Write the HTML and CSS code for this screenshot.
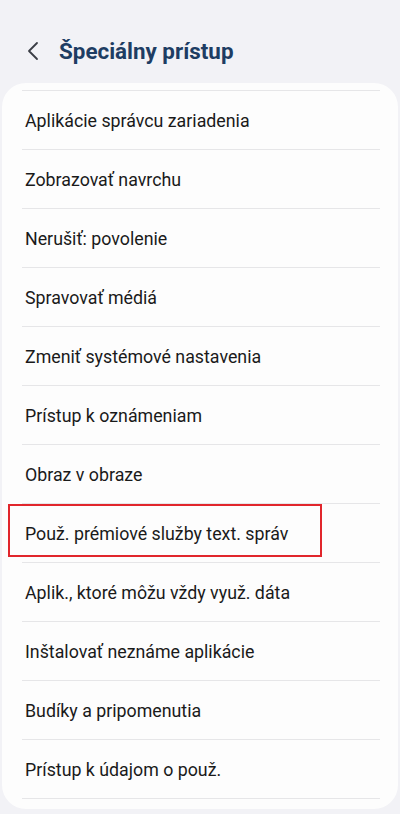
FILE: index.html
```html
<!DOCTYPE html>
<html lang="sk">

<head>
    <meta charset="UTF-8">
    <meta name="viewport" content="width=device-width, initial-scale=1.0">
    <title>Špeciálny prístup</title>
    <link rel="stylesheet" href="styles.css">
</head>

<body>
    <!-- Header -->
    <div class="header">
        <button class="back" aria-label="Späť">
            <svg width="14" height="20" viewBox="0 0 14 20">
                <polyline points="11,2 3,10 11,18" fill="none" stroke="#3a3d44" stroke-width="1.8" stroke-linecap="round" stroke-linejoin="round" />
            </svg>
        </button>
        <h1 class="title">Špeciálny prístup</h1>
    </div>

    <!-- Settings list -->
    <div class="card">
        <ul class="list">
            <li class="item">Aplikácie správcu zariadenia</li>
            <li class="item">Zobrazovať navrchu</li>
            <li class="item">Nerušiť: povolenie</li>
            <li class="item">Spravovať médiá</li>
            <li class="item">Zmeniť systémové nastavenia</li>
            <li class="item">Prístup k oznámeniam</li>
            <li class="item">Obraz v obraze</li>
            <li class="item marked">Použ. prémiové služby text. správ</li>
            <li class="item">Aplik., ktoré môžu vždy využ. dáta</li>
            <li class="item">Inštalovať neznáme aplikácie</li>
            <li class="item">Budíky a pripomenutia</li>
            <li class="item">Prístup k údajom o použ.</li>
        </ul>
    </div>
</body>

</html>
```

FILE: styles.css
```css
body {
    font-family: Roboto, "Noto Sans", Arial, sans-serif;
    background-color: #f2f2f6;
    color: #1a1a1a;
    margin: 0;
    width: 400px;
    height: 814px;
    overflow: hidden;
}

.header {
    display: flex;
    align-items: center;
    height: 83px;
    padding: 18px 0 0 23px;
    box-sizing: border-box;
}

.back {
    background: none;
    border: none;
    padding: 0;
    width: 20px;
    height: 24px;
    display: flex;
    align-items: center;
    justify-content: center;
    cursor: pointer;
}

.title {
    margin: 0 0 0 16px;
    font-size: 22.4px;
    font-weight: 700;
    color: #1e3d63;
    letter-spacing: 0;
}

.card {
    background-color: #fdfdfd;
    margin: 0 2px;
    border-radius: 24px;
    padding: 7px 18px 10px 20px;
}

.list {
    list-style: none;
    margin: 0;
    padding: 0;
    border-bottom: 1px solid #e6e6e8;
}

.item {
    position: relative;
    height: 58px;
    display: flex;
    align-items: center;
    padding-left: 3px;
    border-top: 1px solid #e6e6e8;
    font-size: 17.8px;
}

.item.marked::after {
    content: "";
    position: absolute;
    left: -14px;
    top: 0;
    width: 310px;
    height: 49px;
    border: 2px solid #e1262c;
}
```
